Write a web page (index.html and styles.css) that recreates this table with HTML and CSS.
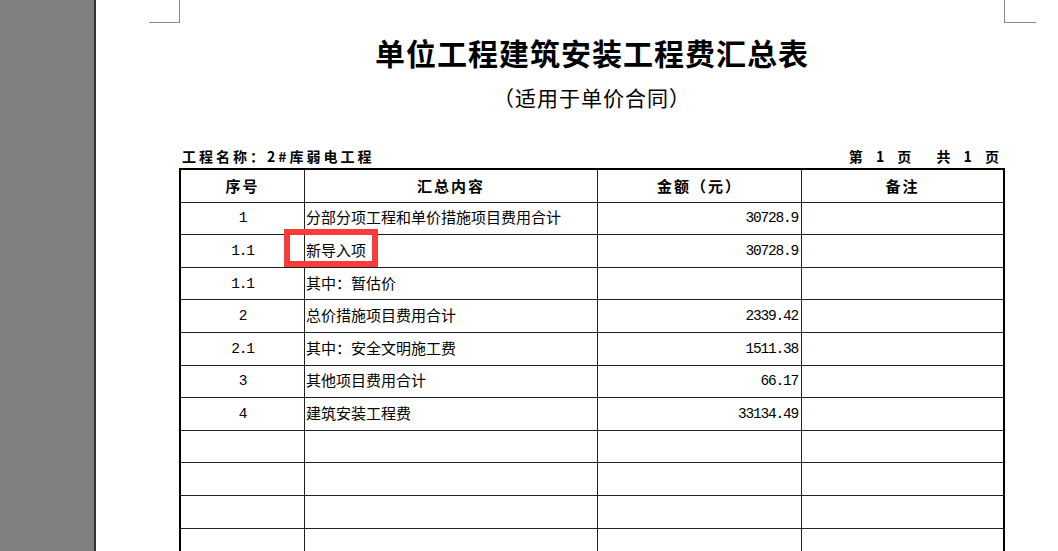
FILE: index.html
```html
<!DOCTYPE html>
<html lang="zh-CN">
<head>
<meta charset="utf-8">
<title>单位工程建筑安装工程费汇总表</title>
<link rel="stylesheet" href="styles.css">
</head>
<body>
<div class="app">
  <aside class="side"></aside>
  <main class="page">
    <div class="marks"><span class="mark mark-l"></span><span class="mark mark-r"></span></div>
    <div class="doc">
      <h1 class="title">单位工程建筑安装工程费汇总表</h1>
      <p class="subtitle">（适用于单价合同）</p>
      <div class="meta">
        <span class="proj">工程名称：2#库弱电工程</span>
        <span class="pages"><span class="pg">第 1 页</span><span class="pg">共 1 页</span></span>
      </div>
      <div class="sheet">
        <div class="cell head">序号</div>
        <div class="cell head">汇总内容</div>
        <div class="cell head">金额（元）</div>
        <div class="cell head last">备注</div>

        <div class="cell num">1</div>
        <div class="cell txt">分部分项工程和单价措施项目费用合计</div>
        <div class="cell amt">30728.9</div>
        <div class="cell last"></div>

        <div class="cell num">1.1</div>
        <div class="cell txt mark-cell">新导入项<span class="hl"></span></div>
        <div class="cell amt">30728.9</div>
        <div class="cell last"></div>

        <div class="cell num">1.1</div>
        <div class="cell txt">其中：暂估价</div>
        <div class="cell amt"></div>
        <div class="cell last"></div>

        <div class="cell num">2</div>
        <div class="cell txt">总价措施项目费用合计</div>
        <div class="cell amt">2339.42</div>
        <div class="cell last"></div>

        <div class="cell num">2.1</div>
        <div class="cell txt">其中：安全文明施工费</div>
        <div class="cell amt">1511.38</div>
        <div class="cell last"></div>

        <div class="cell num">3</div>
        <div class="cell txt">其他项目费用合计</div>
        <div class="cell amt">66.17</div>
        <div class="cell last"></div>

        <div class="cell num">4</div>
        <div class="cell txt">建筑安装工程费</div>
        <div class="cell amt">33134.49</div>
        <div class="cell last"></div>

        <div class="cell"></div><div class="cell"></div><div class="cell"></div><div class="cell last"></div>
        <div class="cell"></div><div class="cell"></div><div class="cell"></div><div class="cell last"></div>
        <div class="cell"></div><div class="cell"></div><div class="cell"></div><div class="cell last"></div>
        <div class="cell"></div><div class="cell"></div><div class="cell"></div><div class="cell last"></div>
        <div class="cell"></div><div class="cell"></div><div class="cell"></div><div class="cell last"></div>
      </div>
    </div>
  </main>
</div>
</body>
</html>
```

FILE: styles.css
```css
* { box-sizing: border-box; }
html, body {
  margin: 0;
  padding: 0;
  height: 100%;
  overflow: hidden;
  background: #fff;
}
body {
  font-family: "Noto Sans CJK SC", "Noto Sans", sans-serif;
  color: #000;
}
.app {
  display: flex;
  height: 100%;
}
.side {
  flex: 0 0 96px;
  background: #808080;
  border-right: 2px solid #333;
}
.page {
  flex: 1;
  background: #fff;
}
.marks {
  display: flex;
  justify-content: space-between;
  margin-left: 53px;
  width: 887px;
  height: 23px;
}
.mark {
  display: block;
  width: 31px;
  height: 23px;
  border-bottom: 1px solid #888;
}
.mark-l { border-right: 1px solid #888; }
.mark-r { border-left: 1px solid #888; width: 32px; }

.doc {
  margin-left: 83px;
  width: 826px;
}
.title {
  margin: 11px 0 0;
  font-size: 30px;
  line-height: 36px;
  font-weight: 700;
  letter-spacing: 1px;
  text-align: center;
}
.subtitle {
  margin: 14px 0 0;
  font-size: 21px;
  line-height: 26px;
  font-weight: 400;
  letter-spacing: 1px;
  text-align: center;
}
.meta {
  margin-top: 38px;
  height: 20px;
  display: flex;
  justify-content: space-between;
  padding: 0 5px 0 3px;
  font-size: 14px;
  line-height: 16px;
  font-weight: 700;
  letter-spacing: 3px;
}
.pages { display: flex; gap: 24px; letter-spacing: 0; }
.pg { word-spacing: 8px; letter-spacing: 1px; }

.sheet {
  display: grid;
  grid-template-columns: 124px 293px 204px 1fr;
  grid-auto-rows: 32.6px;
  border-top: 2px solid #000;
  border-left: 2px solid #000;
  border-right: 2px solid #000;
}
.cell {
  border-right: 1px solid #222;
  border-bottom: 1px solid #222;
  display: flex;
  align-items: center;
  font-size: 15px;
  line-height: 18px;
  padding-bottom: 2px;
  position: relative;
  white-space: nowrap;
}
.cell.last { border-right: 0; }
.head {
  justify-content: center;
  font-weight: 700;
  letter-spacing: 2px;
  padding-bottom: 0;
}
.num {
  justify-content: center;
  font-family: "Liberation Mono", "DejaVu Sans Mono", monospace;
  font-size: 14.5px;
  letter-spacing: -1.2px;
  padding-bottom: 0;
}
.txt {
  padding-left: 1px;
}
.amt {
  justify-content: flex-end;
  padding-right: 3px;
  padding-bottom: 0;
  font-family: "Liberation Mono", "DejaVu Sans Mono", monospace;
  font-size: 14.5px;
  letter-spacing: -1.2px;
}
.hl {
  position: absolute;
  left: -21px;
  top: -6px;
  width: 94px;
  height: 38px;
  border: 6px solid #fb3a3a;
  pointer-events: none;
}
```
